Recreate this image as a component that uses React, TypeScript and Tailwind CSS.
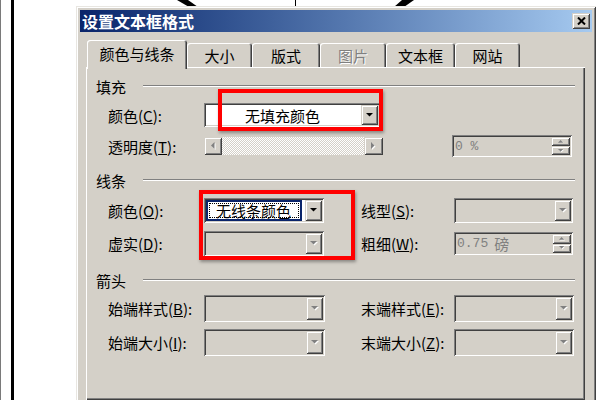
import type { ReactNode } from "react";

// Classic Win2000 bevels.
const SUNKEN =
  "shadow-[inset_1px_1px_0_#808080,inset_-1px_-1px_0_#ffffff,inset_2px_2px_0_#404040,inset_-2px_-2px_0_#d4d0c8]";
const RAISED =
  "shadow-[inset_1px_1px_0_#d4d0c8,inset_-1px_-1px_0_#404040,inset_2px_2px_0_#ffffff,inset_-2px_-2px_0_#808080]";
const PANEL = "shadow-[inset_1px_1px_0_#ffffff,inset_-1px_-1px_0_#404040,inset_-2px_-2px_0_#808080]";
const TAB = "shadow-[inset_1px_1px_0_#ffffff,inset_-1px_0_0_#404040,inset_-2px_0_0_#808080]";

const TABS = [
  { label: "颜色与线条", w: "w-[100px]", active: true },
  { label: "大小", w: "w-[65px]" },
  { label: "版式", w: "w-[68px]" },
  { label: "图片", w: "w-[66px]", disabled: true },
  { label: "文本框", w: "w-[69px]" },
  { label: "网站", w: "w-[65px]" },
];

type Dir = "down" | "up" | "left" | "right";

function Tri({ dir, disabled, small }: { dir: Dir; disabled?: boolean; small?: boolean }) {
  const pts = {
    down: "0,0 7,0 3.5,3.5",
    up: "3.5,0 7,3.5 0,3.5",
    left: "3.5,0 3.5,7 0,3.5",
    right: "0,0 3.5,3.5 0,7",
  }[dir];
  const vert = dir === "down" || dir === "up";
  const k = small ? 0.75 : 1;
  return (
    <svg
      width={(vert ? 8 : 5) * k}
      height={(vert ? 5 : 8) * k}
      viewBox={vert ? "0 0 8 5" : "0 0 5 8"}
    >
      {disabled && <polygon points={pts} fill="#ffffff" transform="translate(1 1)" />}
      <polygon points={pts} fill={disabled ? "#808080" : "#000000"} />
    </svg>
  );
}

function Combo({
  className,
  disabled,
  children,
}: {
  className: string;
  disabled?: boolean;
  children?: ReactNode;
}) {
  return (
    <div
      className={`flex shrink-0 p-[2px] ${disabled ? "bg-[#d4d0c8]" : "bg-white"} ${SUNKEN} ${className}`}
    >
      <div className="flex min-w-0 flex-1 items-center">{children}</div>
      <div className={`flex w-[17px] shrink-0 items-center justify-center bg-[#d4d0c8] ${RAISED}`}>
        <Tri dir="down" disabled={disabled} />
      </div>
    </div>
  );
}

function Spin({ className, children }: { className: string; children: ReactNode }) {
  return (
    <div className={`flex shrink-0 bg-[#d4d0c8] p-[2px] ${SUNKEN} ${className}`}>
      <div className="flex flex-1 items-center pl-[1px] font-['Liberation_Mono','Noto_Sans_CJK_SC',monospace] text-[13px] leading-none text-[#808080]">
        {children}
      </div>
      <div className="flex w-[19px] flex-col">
        <div className={`flex flex-1 items-center justify-center bg-[#d4d0c8] ${RAISED}`}>
          <Tri dir="up" disabled small />
        </div>
        <div className={`flex flex-1 items-center justify-center bg-[#d4d0c8] ${RAISED}`}>
          <Tri dir="down" disabled small />
        </div>
      </div>
    </div>
  );
}

function Group({ title }: { title: string }) {
  return (
    <div className="flex h-[16px] items-center">
      <span className="w-[47px] shrink-0 leading-none">{title}</span>
      <div className="h-[2px] flex-1 border-t border-b border-t-[#808080] border-b-white" />
    </div>
  );
}

function Label({ text, k, w }: { text: string; k: string; w: string }) {
  return (
    <span className={`shrink-0 leading-none ${w}`}>
      {text}(<u>{k}</u>):
    </span>
  );
}

export default function App() {
  return (
    <div className="relative flex h-[400px] w-[600px] overflow-hidden bg-white font-['Noto_Sans_CJK_SC','Noto_Sans',sans-serif] text-[15px] text-black">
      {/* edge of the drawing behind the dialog */}
      <div className="w-[1px] shrink-0 bg-[#7a7a7a]" />
      <div className="ml-[10px] w-[3px] shrink-0 bg-black" />
      <svg className="absolute left-0 top-0" width="600" height="8">
        <polygon points="177,0 188,0 198,7 189,7" fill="#000" />
        <polygon points="402,0 414,0 404,7 394,7" fill="#000" />
        <rect x="295" y="0" width="1" height="7" fill="#000" />
      </svg>

      {/* dialog */}
      <div className="relative z-10 ml-[62px] mt-[6px] h-[420px] w-[520px] shrink-0 bg-[#d4d0c8] p-[4px] shadow-[inset_1px_1px_0_#e8e6e1,inset_-1px_-1px_0_#404040,inset_2px_2px_0_#ffffff,inset_-2px_-2px_0_#808080]">
        <div className="flex h-[22px] items-center justify-between bg-linear-to-r from-[#0a246a] to-[#a6caf0] pl-[2px] pr-[2px]">
          <span className="text-[16px] font-bold leading-none text-white">设置文本框格式</span>
          <div className={`flex h-[16px] w-[18px] items-center justify-center bg-[#d4d0c8] ${RAISED}`}>
            <svg width="9" height="8" viewBox="0 0 9 8">
              <path d="M1 0.5 L8 7.5 M8 0.5 L1 7.5" stroke="#000" strokeWidth="2" />
            </svg>
          </div>
        </div>

        {/* tabs */}
        <div className="relative z-10 ml-[7px] mt-[8px] flex h-[27px] items-end">
          {TABS.map((t) => (
            <div
              key={t.label}
              className={`flex shrink-0 items-center justify-center rounded-t-[3px] bg-[#d4d0c8] leading-none ${TAB} ${t.w} ${
                t.active ? "-mb-[2px] h-[29px] pb-[2px]" : "h-[24px]"
              } ${t.disabled ? "text-[#808080] [text-shadow:1px_1px_0_#ffffff]" : ""}`}
            >
              {t.label}
            </div>
          ))}
        </div>

        {/* tab page */}
        <div className={`ml-[6px] mr-[7px] h-[333px] pl-[10px] pr-[10px] pt-[11px] ${PANEL}`}>
          <Group title="填充" />
          <div className="mt-[9px] flex h-[24px] items-center pl-[12px]">
            <Label text="颜色" k="C" w="w-[96px]" />
            <Combo className="h-[24px] w-[176px]">
              <span className="pl-[39px] leading-none">无填充颜色</span>
            </Combo>
          </div>
          <div className="mt-[8px] flex h-[22px] items-center pl-[12px]">
            <Label text="透明度" k="T" w="w-[96px]" />
            <div className="flex h-[18px] w-[179px] shrink-0">
              <div className={`flex w-[18px] items-center justify-center bg-[#d4d0c8] ${RAISED}`}>
                <Tri dir="left" disabled />
              </div>
              <div className="flex-1 bg-[image:repeating-conic-gradient(#ffffff_0_25%,#d4d0c8_0_50%)] bg-[length:2px_2px]" />
              <div className={`flex w-[19px] items-center justify-center bg-[#d4d0c8] ${RAISED}`}>
                <Tri dir="right" disabled />
              </div>
            </div>
            <Spin className="ml-[69px] h-[22px] w-[120px]">0 %</Spin>
          </div>

          <div className="mt-[15px]">
            <Group title="线条" />
          </div>
          <div className="mt-[9px] flex h-[26px] items-center pl-[12px]">
            <Label text="颜色" k="O" w="w-[96px]" />
            <Combo className="h-[25px] w-[120px]">
              <div className="mr-[3px] h-full flex-1 border-2 border-[#0a246a] bg-white p-[1px]">
                <div className="flex h-full items-center border border-dotted border-black pl-[6px] leading-none">
                  无线条颜色
                </div>
              </div>
            </Combo>
            <span className="ml-[37px]" />
            <Label text="线型" k="S" w="w-[93px]" />
            <Combo className="h-[25px] w-[119px]" disabled />
          </div>
          <div className="mt-[8px] flex h-[25px] items-center pl-[12px]">
            <Label text="虚实" k="D" w="w-[96px]" />
            <Combo className="h-[25px] w-[120px]" disabled />
            <span className="ml-[37px]" />
            <Label text="粗细" k="W" w="w-[93px]" />
            <Spin className="h-[23px] w-[119px]">
              0.75 <span className="ml-[6px] font-['Noto_Sans_CJK_SC',sans-serif] text-[15px]">磅</span>
            </Spin>
          </div>

          <div className="mt-[16px]">
            <Group title="箭头" />
          </div>
          <div className="mt-[7px] flex h-[27px] items-center pl-[12px]">
            <Label text="始端样式" k="B" w="w-[96px]" />
            <Combo className="h-[27px] w-[121px]" disabled />
            <span className="ml-[36px]" />
            <Label text="末端样式" k="E" w="w-[93px]" />
            <Combo className="h-[27px] w-[120px]" disabled />
          </div>
          <div className="mt-[7px] flex h-[27px] items-center pl-[12px]">
            <Label text="始端大小" k="I" w="w-[96px]" />
            <Combo className="h-[27px] w-[121px]" disabled />
            <span className="ml-[36px]" />
            <Label text="末端大小" k="Z" w="w-[93px]" />
            <Combo className="h-[27px] w-[120px]" disabled />
          </div>
        </div>
      </div>

      {/* red annotation frames */}
      <div className="absolute left-[218px] top-[89px] z-20 h-[42px] w-[165px] border-4 border-[#ff0000] shadow-[1px_2px_3px_rgba(0,0,0,0.35)]" />
      <div className="absolute left-[199px] top-[190px] z-20 h-[70px] w-[156px] border-4 border-[#ff0000] shadow-[1px_2px_3px_rgba(0,0,0,0.35)]" />
    </div>
  );
}
